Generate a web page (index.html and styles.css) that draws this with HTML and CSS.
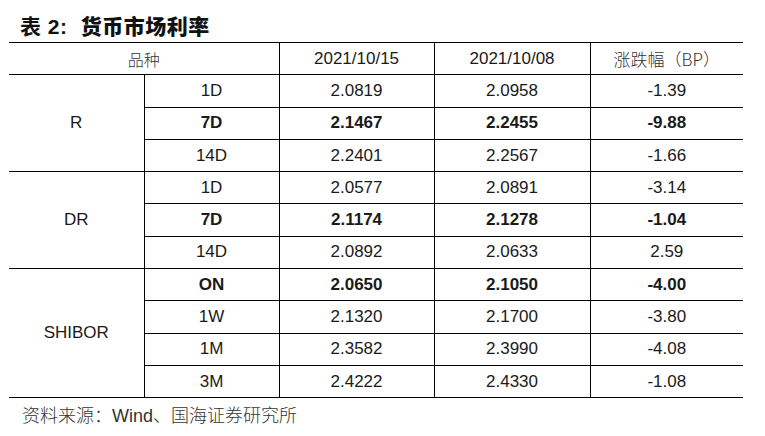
FILE: index.html
```html
<!DOCTYPE html>
<html lang="zh">
<head>
<meta charset="utf-8">
<title>表 2：货币市场利率</title>
<link rel="stylesheet" href="styles.css">
</head>
<body>
<div class="page">
  <h1 class="title"><span class="num">表 2:</span> 货币市场利率</h1>
  <table class="rates">
    <colgroup>
      <col class="c1"><col class="c2"><col class="c3"><col class="c4"><col class="c5">
    </colgroup>
    <thead>
      <tr>
        <th colspan="2" class="cjk">品种</th>
        <th>2021/10/15</th>
        <th>2021/10/08</th>
        <th class="cjk wide">涨跌幅（BP）</th>
      </tr>
    </thead>
    <tbody class="grp">
      <tr><td rowspan="3" class="name">R</td><td>1D</td><td>2.0819</td><td>2.0958</td><td>-1.39</td></tr>
      <tr class="b"><td>7D</td><td>2.1467</td><td>2.2455</td><td>-9.88</td></tr>
      <tr><td>14D</td><td>2.2401</td><td>2.2567</td><td>-1.66</td></tr>
    </tbody>
    <tbody class="grp">
      <tr><td rowspan="3" class="name">DR</td><td>1D</td><td>2.0577</td><td>2.0891</td><td>-3.14</td></tr>
      <tr class="b"><td>7D</td><td>2.1174</td><td>2.1278</td><td>-1.04</td></tr>
      <tr><td>14D</td><td>2.0892</td><td>2.0633</td><td>2.59</td></tr>
    </tbody>
    <tbody class="grp">
      <tr class="b"><td rowspan="4" class="name">SHIBOR</td><td>ON</td><td>2.0650</td><td>2.1050</td><td>-4.00</td></tr>
      <tr><td>1W</td><td>2.1320</td><td>2.1700</td><td>-3.80</td></tr>
      <tr><td>1M</td><td>2.3582</td><td>2.3990</td><td>-4.08</td></tr>
      <tr><td>3M</td><td>2.4222</td><td>2.4330</td><td>-1.08</td></tr>
    </tbody>
  </table>
  <p class="source">资料来源：<span class="latin">Wind</span>、国海证券研究所</p>
</div>
</body>
</html>
```
FILE: styles.css
```css
html, body {
  margin: 0;
  padding: 0;
  background: #fff;
}
.page {
  padding: 13px 0 0 9px;
  font-family: "Liberation Sans", Arial, "Noto Sans CJK SC", sans-serif;
  color: #1a1a1a;
}
.title {
  margin: 0 0 4px 11px;
  height: 25px;
  font-family: "Noto Sans CJK SC", sans-serif;
  font-size: 21px;
  font-weight: 900;
  line-height: 25px;
  color: #111;
  letter-spacing: 0.5px;
}
.title .num {
  font-family: "Liberation Sans", "Noto Sans CJK SC", sans-serif;
  font-weight: 700;
  margin-right: 8px;
}
.rates {
  border-collapse: collapse;
  table-layout: fixed;
  width: 734px;
  font-size: 17px;
}
.c1 { width: 135px; }
.c2 { width: 135px; }
.c3 { width: 155px; }
.c4 { width: 156px; }
.c5 { width: 153px; }
.rates th, .rates td {
  height: 31.3px;
  padding: 0;
  text-align: center;
  vertical-align: middle;
  font-weight: 400;
  border-left: 1px solid #000;
  border-top: 1px solid #000;
  border-bottom: 1px solid #000;
  line-height: 20px;
}
.rates th:first-child, .rates td.name {
  border-left: none;
}
.rates .cjk {
  font-family: "Noto Sans CJK SC", sans-serif;
  font-weight: 300;
  font-size: 16px;
  color: #333;
}
.rates .cjk.wide {
  font-size: 17px;
}
.rates tr.b td:not(.name) {
  font-weight: 700;
}
.source {
  margin: 6px 0 0 13px;
  font-family: "Noto Sans CJK SC", sans-serif;
  font-weight: 300;
  font-size: 18px;
  color: #333;
  line-height: 20px;
}
.source .latin {
  font-family: "Liberation Sans", sans-serif;
}
```
